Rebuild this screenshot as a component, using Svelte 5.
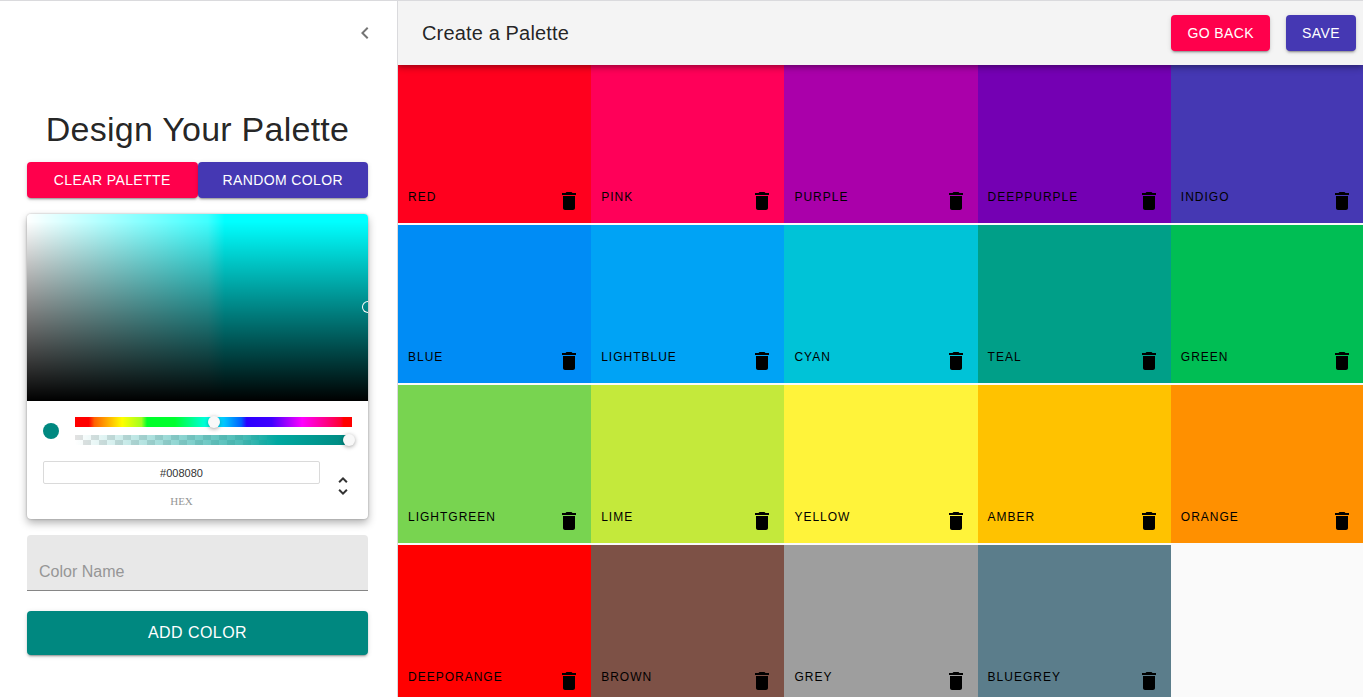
<script>
  let hex = $state('#008080');
  let hue = $state(180);
  let alpha = $state(100);
  let colorName = $state('');

  let colors = $state([
    { name: 'red', color: '#ff001e' },
    { name: 'pink', color: '#ff0059' },
    { name: 'purple', color: '#aa00aa' },
    { name: 'deeppurple', color: '#7400b3' },
    { name: 'indigo', color: '#4538b3' },
    { name: 'blue', color: '#008cf5' },
    { name: 'lightblue', color: '#00a3f5' },
    { name: 'cyan', color: '#00c3d7' },
    { name: 'teal', color: '#009f88' },
    { name: 'green', color: '#00be54' },
    { name: 'lightgreen', color: '#78d450' },
    { name: 'lime', color: '#c4e93b' },
    { name: 'yellow', color: '#fff33a' },
    { name: 'amber', color: '#ffc200' },
    { name: 'orange', color: '#ff9000' },
    { name: 'deeporange', color: '#ff0000' },
    { name: 'brown', color: '#7d5146' },
    { name: 'grey', color: '#9e9e9e' },
    { name: 'bluegrey', color: '#5b7d8b' }
  ]);

  function remove(name) {
    colors = colors.filter((c) => c.name !== name);
  }

  function addColor() {
    if (colorName) colors = [...colors, { name: colorName, color: hex }];
    colorName = '';
  }
</script>

<div class="page">
  <aside class="drawer">
    <div class="drawer-head">
      <button class="icon-button" aria-label="Close drawer">
        <svg viewBox="0 0 24 24" width="24" height="24"><path d="M15.41 7.41L14 6l-6 6 6 6 1.41-1.41L10.83 12z" /></svg>
      </button>
    </div>

    <div class="designer">
      <h1>Design Your Palette</h1>
      <div class="actions">
        <button class="btn pink" onclick={() => (colors = [])}>Clear Palette</button>
        <button class="btn indigo">Random Color</button>
      </div>

      <div class="picker">
        <div class="saturation"><span class="pointer"></span></div>
        <div class="controls">
          <div class="sliders">
            <span class="swatch"></span>
            <div class="tracks">
              <div class="track hue"><input type="range" min="0" max="360" bind:value={hue} aria-label="Hue" /></div>
              <div class="track alpha"><input type="range" min="0" max="100" bind:value={alpha} aria-label="Alpha" /></div>
            </div>
          </div>
          <div class="fields">
            <div class="hex">
              <input id="hex" type="text" bind:value={hex} />
              <label for="hex">hex</label>
            </div>
            <button class="toggle" aria-label="Change format">
              <svg viewBox="0 0 24 24" width="24" height="24"><path d="M12 5.83L15.17 9l1.41-1.41L12 3 7.41 7.59 8.83 9zM12 18.17L8.83 15l-1.41 1.41L12 21l4.59-4.59L15.17 15z" /></svg>
            </button>
          </div>
        </div>
      </div>

      <label class="name-field">
        {#if !colorName}<span>Color Name</span>{/if}
        <input type="text" bind:value={colorName} />
      </label>
      <button class="btn add" onclick={addColor}>Add Color</button>
    </div>
  </aside>

  <main>
    <header>
      <h2>Create a Palette</h2>
      <nav>
        <button class="btn pink">Go Back</button>
        <button class="btn indigo">Save</button>
      </nav>
    </header>
    <div class="palette">
      {#each colors as c (c.name)}
        <div class="box" style:background-color={c.color}>
          <span>{c.name}</span>
          <button class="delete" aria-label="Delete {c.name}" onclick={() => remove(c.name)}>
            <svg viewBox="0 0 24 24" width="24" height="24"><path d="M6 19c0 1.1.9 2 2 2h8c1.1 0 2-.9 2-2V7H6v12zM19 4h-3.5l-1-1h-5l-1 1H5v2h14V4z" /></svg>
          </button>
        </div>
      {/each}
    </div>
  </main>
</div>

<style>
  :global(body) {
    margin: 0;
    background: #fafafa;
  }

  .page {
    box-sizing: border-box;
    display: flex;
    height: 100vh;
    overflow: hidden;
    border-top: 1px solid #dadadd;
    color: rgba(0, 0, 0, 0.87);
    font-family: "Liberation Sans", Arial, sans-serif;
  }

  button {
    border: 0;
    padding: 0;
    background: none;
    font: inherit;
    color: inherit;
    cursor: pointer;
  }

  svg {
    display: block;
    fill: currentColor;
  }

  h1,
  h2 {
    margin: 0;
    font-weight: 400;
  }

  .drawer {
    position: relative;
    z-index: 2;
    box-sizing: border-box;
    display: flex;
    flex: 0 0 398px;
    flex-direction: column;
    border-right: 1px solid #dadadd;
    background: #fff;
  }

  .drawer-head {
    display: flex;
    flex: 0 0 64px;
    align-items: center;
    justify-content: flex-end;
    padding-right: 8px;
  }

  .icon-button {
    padding: 12px;
    color: #757575;
  }

  .designer {
    display: flex;
    flex: 1;
    flex-direction: column;
    justify-content: center;
    padding: 0 29px 0 27px;
  }

  h1 {
    margin-bottom: 12px;
    font-size: 34px;
    line-height: 42px;
    letter-spacing: 0.00735em;
    text-align: center;
  }

  .btn {
    height: 36px;
    padding: 0 16px;
    border-radius: 4px;
    box-shadow: 0 3px 1px -2px rgba(0, 0, 0, 0.2), 0 2px 2px 0 rgba(0, 0, 0, 0.14), 0 1px 5px 0 rgba(0, 0, 0, 0.12);
    color: #fff;
    font-size: 14px;
    letter-spacing: 0.02857em;
    text-transform: uppercase;
    white-space: nowrap;
  }

  .pink {
    background: #ff004c;
  }

  .indigo {
    background: #4538b3;
  }

  .actions {
    display: grid;
    grid-template-columns: 1fr 1fr;
    margin-bottom: 16px;
  }

  .picker {
    margin-bottom: 16px;
    border-radius: 4px;
    background: #fff;
    box-shadow: 0 0 2px rgba(0, 0, 0, 0.3), 0 4px 8px rgba(0, 0, 0, 0.3);
  }

  .saturation {
    position: relative;
    aspect-ratio: 341 / 187;
    overflow: hidden;
    border-radius: 4px 4px 0 0;
    background:
      linear-gradient(to top, #000, rgba(0, 0, 0, 0) 96%),
      linear-gradient(to right, #fff, rgba(255, 255, 255, 0.25) 53%, rgba(255, 255, 255, 0) 58%),
      #0ff;
  }

  .pointer {
    position: absolute;
    top: 50%;
    left: 100%;
    width: 12px;
    height: 12px;
    border-radius: 50%;
    box-shadow: inset 0 0 0 1px #fff;
    transform: translate(-50%, -50%);
  }

  .controls {
    padding: 16px 16px 12px;
  }

  .sliders {
    display: flex;
    align-items: center;
    gap: 16px;
  }

  .swatch {
    width: 16px;
    height: 16px;
    border-radius: 50%;
    background: #008880;
  }

  .tracks {
    display: grid;
    flex: 1;
    gap: 8px;
  }

  .track {
    display: flex;
    height: 10px;
  }

  .hue {
    background: linear-gradient(to right, #f00 5%, #ff6000 7%, #ff0 17%, #a0ff20 24%, #00ff28 26%, #00ff30 36%, #0fc 46%, #0ff 50%, #00b4ff 55%, #0060ff 60%, #2a00ff 62%, #4000ff 71%, #f0f 82%, #ff0080 91%, #ff0030 96%, #f00 97%);
  }

  .alpha {
    background:
      linear-gradient(to right, rgba(0, 136, 128, 0), rgba(0, 160, 152, 0.7) 60%, #00a8a0 73%, #008880),
      conic-gradient(#fff 25%, #e2e2e2 0 50%, #fff 0 75%, #e2e2e2 0) 0 0 / 16px 10px;
  }

  .track input {
    flex: 1;
    min-width: 0;
    height: 10px;
    margin: 0 -3px;
    background: none;
    appearance: none;
  }

  .track input::-webkit-slider-thumb {
    width: 12px;
    height: 12px;
    border-radius: 50%;
    background: #f8f8f8;
    box-shadow: 0 1px 4px rgba(0, 0, 0, 0.37);
    appearance: none;
  }

  .fields {
    display: flex;
    gap: 11px;
    margin-top: 16px;
  }

  .hex {
    display: flex;
    flex: 1;
    flex-direction: column;
    gap: 12px;
  }

  .hex input {
    box-sizing: border-box;
    width: 100%;
    height: 23px;
    padding: 1px 0 0;
    border: 1px solid #dadada;
    border-radius: 2px;
    color: #333;
    font: 11px "Liberation Sans", Arial, sans-serif;
    text-align: center;
  }

  .hex label {
    color: #969696;
    font: 11px/11px "Liberation Serif", "Times New Roman", serif;
    text-align: center;
    text-transform: uppercase;
  }

  .toggle {
    align-self: center;
    margin: 4px -3px 0 0;
    color: #333;
  }

  .name-field {
    display: grid;
    height: 55px;
    margin-bottom: 20px;
    border-bottom: 1px solid #868686;
    border-radius: 4px 4px 0 0;
    background: #e8e8e8;
    font-size: 16px;
    line-height: 19px;
  }

  .name-field > * {
    grid-area: 1 / 1;
    padding: 27px 12px 9px;
  }

  .name-field span {
    color: #969696;
  }

  .name-field input {
    min-width: 0;
    border: 0;
    background: none;
    font: inherit;
  }

  .add {
    height: 44px;
    background: #008880;
    font-size: 16px;
  }

  main {
    display: flex;
    flex: 1;
    flex-direction: column;
    min-width: 0;
  }

  header {
    display: flex;
    position: relative;
    flex: 0 0 64px;
    align-items: center;
    justify-content: space-between;
    box-sizing: border-box;
    padding: 0 7px 0 24px;
    background: #f4f4f4;
    box-shadow: 0 2px 4px -1px rgba(0, 0, 0, 0.2), 0 4px 5px 0 rgba(0, 0, 0, 0.14), 0 1px 10px 0 rgba(0, 0, 0, 0.12);
    z-index: 1;
  }

  h2 {
    font-size: 20px;
    line-height: 32px;
    letter-spacing: 0.0075em;
  }

  nav {
    display: flex;
    gap: 16px;
  }

  .palette {
    display: grid;
    flex: 1;
    grid-template-columns: repeat(5, 1fr);
    grid-auto-rows: 25%;
    row-gap: 2px;
    min-height: 0;
    margin-right: -1px;
    overflow: hidden;
  }

  .box {
    display: flex;
    align-items: flex-end;
    justify-content: space-between;
    padding: 10px;
    color: #000;
  }

  .box span {
    padding-bottom: 8px;
    font-size: 12px;
    line-height: 16px;
    letter-spacing: 1px;
    text-transform: uppercase;
  }
</style>
